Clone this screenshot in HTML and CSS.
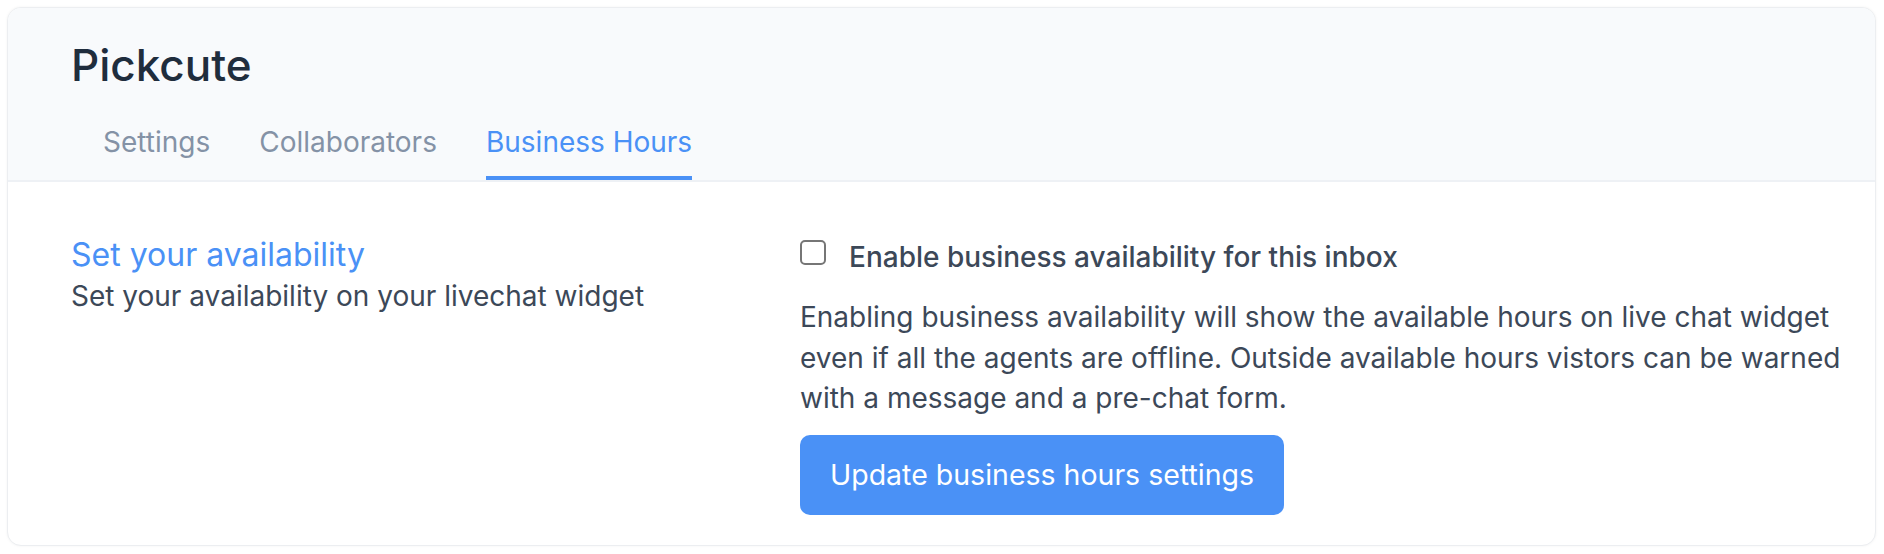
FILE: index.html
```html
<!DOCTYPE html>
<html lang="en">
<head>
<meta charset="utf-8">
<title>Pickcute - Business Hours</title>
<link rel="stylesheet" href="styles.css">
</head>
<body>
<div class="card">
  <header class="header">
    <h1 class="title">Pickcute</h1>
    <nav class="tabs">
      <a class="tab">Settings</a>
      <a class="tab">Collaborators</a>
      <a class="tab active">Business Hours</a>
    </nav>
  </header>
  <section class="content">
    <div class="intro">
      <h2 class="intro-title">Set your availability</h2>
      <p class="intro-text">Set your availability on your livechat widget</p>
    </div>
    <div class="form">
      <label class="check">
        <input class="check-box" type="checkbox">
        <span class="check-label">Enable business availability for this inbox</span>
      </label>
      <p class="help">Enabling business availability will show the available hours on live chat widget even if all the agents are offline. Outside available hours vistors can be warned with a message and a pre-chat form.</p>
      <button class="btn" type="button">Update business hours settings</button>
    </div>
  </section>
</div>
</body>
</html>
```

FILE: styles.css
```css
* { box-sizing: border-box; }
html, body { margin: 0; padding: 0; background: #ffffff; }
body {
  padding: 7px 8px 8px 7px;
  font-family: Inter, "Noto Sans", sans-serif;
  color: #3c4858;
}
.card {
  height: 539px;
  border: 1px solid #eceef1;
  border-radius: 14px;
  box-shadow: 0 0 3px rgba(0, 0, 0, 0.05);
  overflow: hidden;
  background: #ffffff;
}
.header {
  background: #f8fafc;
  border-bottom: 2px solid #eef1f5;
  padding: 34px 0 0 63px;
}
.title {
  margin: 0;
  font-size: 44px;
  line-height: 46px;
  font-weight: 500;
  color: #1f2d3d;
}
.tabs {
  display: flex;
  gap: 49px;
  margin: 34px 0 0 32px;
}
.tab {
  font-size: 28px;
  line-height: 40px;
  color: #8492a6;
  padding-bottom: 14px;
  border-bottom: 4px solid transparent;
}
.tab.active {
  color: #4a91f6;
  border-bottom-color: #4a91f6;
}
.content {
  display: grid;
  grid-template-columns: 729px 1065px;
  padding: 55px 0 0 63px;
}
.intro-title {
  margin: -2px 0 0;
  font-size: 32px;
  line-height: 40px;
  font-weight: 400;
  color: #4a91f6;
}
.intro-text {
  margin: 3px 0 0;
  font-size: 28px;
  line-height: 36px;
}
.check {
  display: flex;
  align-items: center;
  gap: 23px;
  height: 40px;
}
.check-box {
  appearance: none;
  -webkit-appearance: none;
  margin: 0 0 9px;
  width: 26px;
  height: 25px;
  border: 2px solid #767676;
  border-radius: 5px;
  background: #fff;
  flex: none;
}
.check-label {
  font-size: 28px;
  font-weight: 500;
  color: #3c4858;
}
.help {
  margin: 20px 0 0;
  font-size: 28px;
  line-height: 40.5px;
}
.btn {
  display: block;
  margin-top: 16px;
  height: 80px;
  padding: 0 30px;
  border: none;
  border-radius: 10px;
  background: #4a91f6;
  color: #ffffff;
  font-family: Inter, "Noto Sans", sans-serif;
  font-size: 28.5px;
}
```
